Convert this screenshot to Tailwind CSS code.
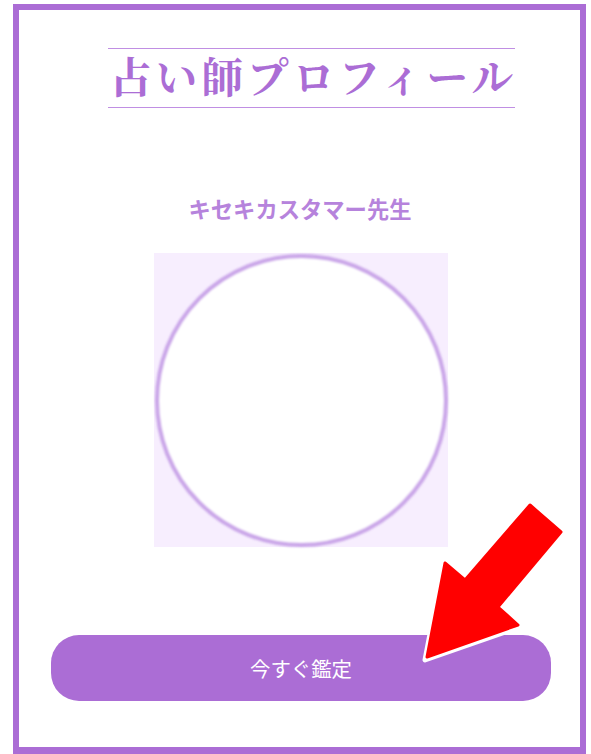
<!DOCTYPE html>
<html lang="ja">
<head>
    <meta charset="UTF-8">
    <meta name="viewport" content="width=device-width, initial-scale=1.0">
    <title>占い師プロフィール</title>
    <script src="https://cdn.jsdelivr.net/npm/@tailwindcss/browser@4"></script>
</head>
<body class="bg-white overflow-hidden font-['Noto_Sans_CJK_JP',sans-serif]">
    <div class="relative w-[591px] h-[754px] pt-[4px] pl-[13px] pr-[5px]">
        <div class="h-[750px] border-[6px] border-b-[7px] border-[#ab6dd5] flex flex-col items-start">
            <h1 class="ml-[89px] mt-[38px] w-[407px] h-[60px] border-y border-[#c08fe3] pl-[2px] text-left text-[41.6px] leading-[53px] tracking-[4.1px] font-bold text-[#ab6dd5] font-['Noto_Serif_CJK_JP','Liberation_Serif','Noto_Sans_CJK_JP',serif] whitespace-nowrap">占い師プロフィール</h1>
            <h2 class="mt-[80px] ml-[169px] w-[224px] text-center text-[22.3px] leading-[40px] font-bold text-[#b683dc] whitespace-nowrap">キセキカスタマー先生</h2>
            <div class="mt-[25px] ml-[135px] w-[294px] h-[294px] bg-[#f7eefe] flex items-center justify-center">
                <div class="w-[293px] h-[293px] rounded-full bg-white border-[4px] border-[#c9a5e8] blur-[1px]"></div>
            </div>
            <button class="mt-[88px] ml-[32px] w-[500px] h-[66px] rounded-[28px] bg-[#ab6dd5] text-white text-[20.4px] leading-[66px] text-center">今すぐ鑑定</button>
        </div>
        <!-- arrow sits over the button -->
        <svg class="absolute left-0 top-0" width="591" height="754" viewBox="0 0 591 754">
            <polygon points="425,660 444,561 465,578 530,503 563,532 500,607 520,627" fill="#fff" stroke="#fff" stroke-width="5" stroke-linejoin="round"/>
            <polygon points="427,657 445,563 465,580 530,505 561,532 498,607 518,625" fill="#ff0000" stroke="#ff0000" stroke-width="3" stroke-linejoin="round"/>
        </svg>
    </div>
</body>
</html>
